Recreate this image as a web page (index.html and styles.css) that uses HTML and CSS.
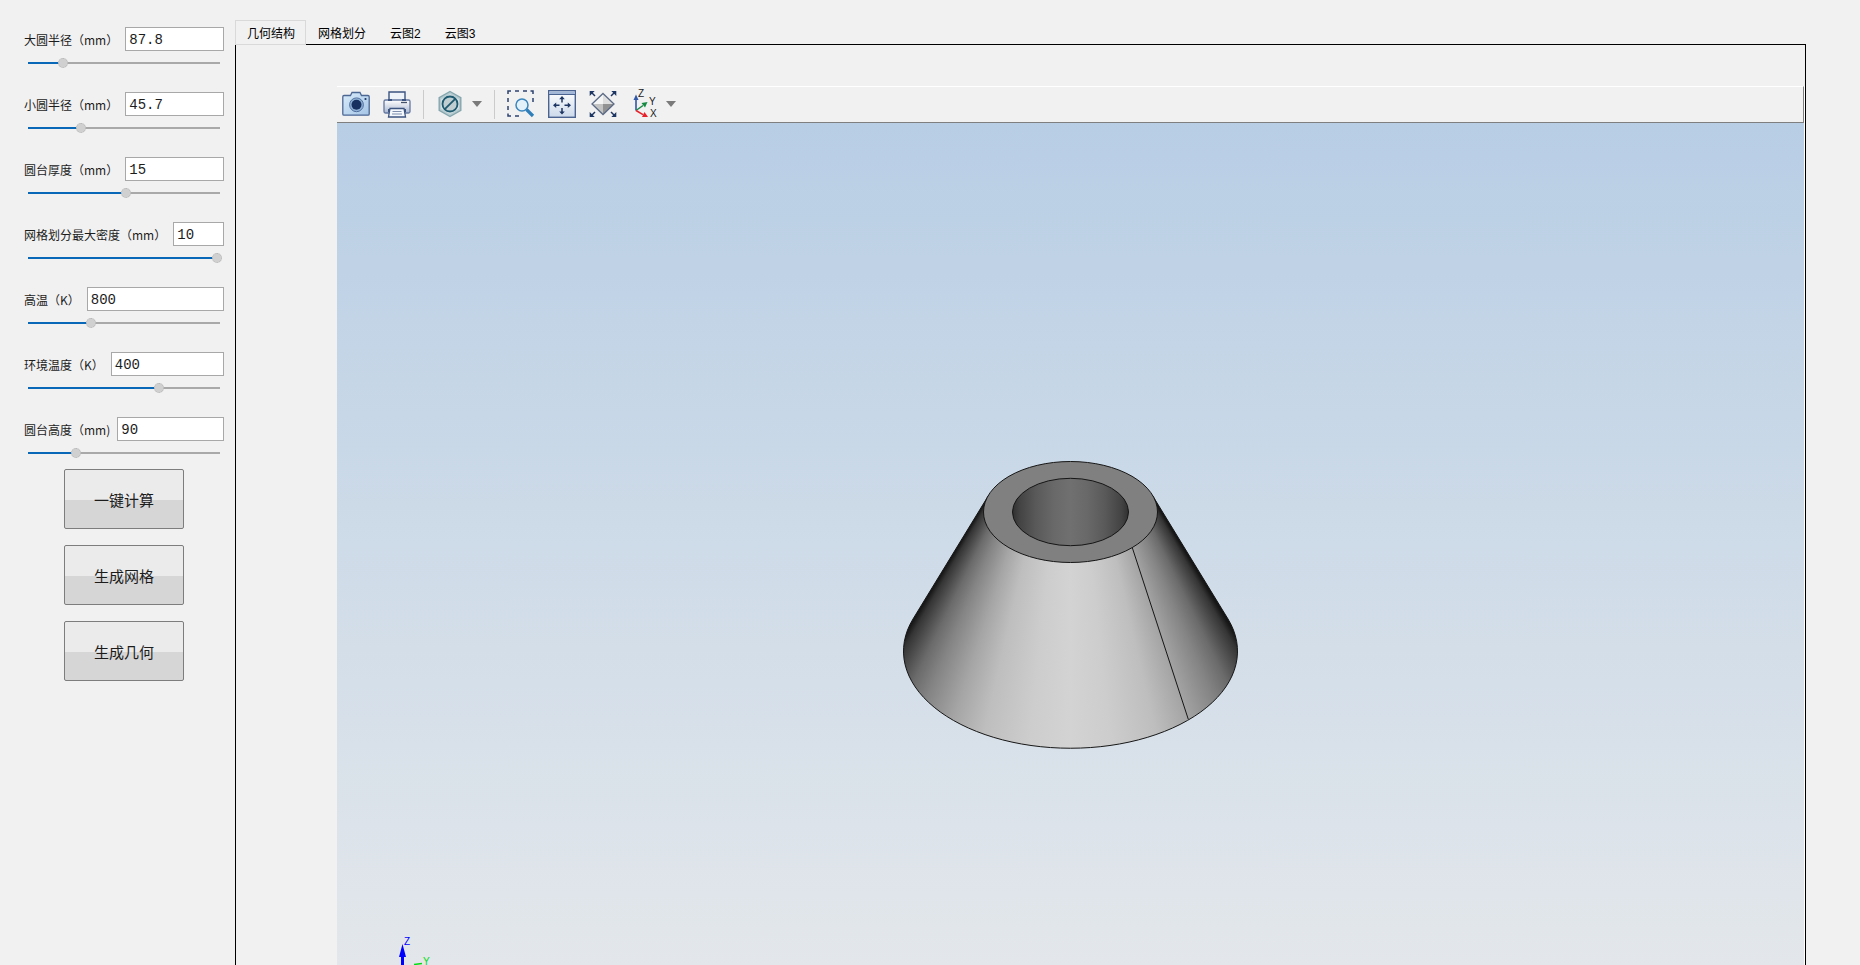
FILE: index.html
```html
<!DOCTYPE html>
<html lang="zh-CN">
<head>
<meta charset="utf-8">
<title>圆台</title>
<link rel="stylesheet" href="styles.css">
</head>
<body>
<div class="app">
  <form class="sidebar">
    <div class="param">
      <div class="param-row"><label for="p1">大圆半径（mm）</label><input class="field" id="p1" type="text" value="87.8"></div>
      <input class="slider" type="range" aria-label="大圆半径" value="17" style="--v:17">
    </div>
    <div class="param">
      <div class="param-row"><label for="p2">小圆半径（mm）</label><input class="field" id="p2" type="text" value="45.7"></div>
      <input class="slider" type="range" aria-label="小圆半径" value="27" style="--v:27">
    </div>
    <div class="param">
      <div class="param-row"><label for="p3">圆台厚度（mm）</label><input class="field" id="p3" type="text" value="15"></div>
      <input class="slider" type="range" aria-label="圆台厚度" value="51" style="--v:51">
    </div>
    <div class="param">
      <div class="param-row"><label for="p4">网格划分最大密度（mm）</label><input class="field" id="p4" type="text" value="10"></div>
      <input class="slider" type="range" aria-label="网格划分最大密度" value="100" style="--v:98">
    </div>
    <div class="param">
      <div class="param-row"><label for="p5">高温（K）</label><input class="field" id="p5" type="text" value="800"></div>
      <input class="slider" type="range" aria-label="高温" value="32" style="--v:32">
    </div>
    <div class="param">
      <div class="param-row"><label for="p6">环境温度（K）</label><input class="field" id="p6" type="text" value="400"></div>
      <input class="slider" type="range" aria-label="环境温度" value="69" style="--v:69">
    </div>
    <div class="param">
      <div class="param-row"><label for="p7">圆台高度（mm)</label><input class="field" id="p7" type="text" value="90"></div>
      <input class="slider" type="range" aria-label="圆台高度" value="24" style="--v:24">
    </div>
    <div class="actions">
      <button class="action" type="button">一键计算</button>
      <button class="action" type="button">生成网格</button>
      <button class="action" type="button">生成几何</button>
    </div>
  </form>

  <main class="main">
    <div class="tabs" role="tablist">
      <button class="tab active" type="button" role="tab" aria-selected="true">几何结构</button>
      <button class="tab" type="button" role="tab">网格划分</button>
      <button class="tab" type="button" role="tab">云图2</button>
      <button class="tab" type="button" role="tab">云图3</button>
    </div>
    <div class="panel">
      <div class="viewer">
        <div class="toolbar">
          <div class="group">
            <button class="tool" type="button" aria-label="截图">
              <svg viewBox="0 0 28 28">
                <defs><linearGradient id="cam" x1="0" y1="0" x2="1" y2="1"><stop offset="0" stop-color="#d9ecfa"/><stop offset="1" stop-color="#a4c4e6"/></linearGradient></defs>
                <path d="M2 5.500h6.500l1.500-3h8l1.500 3H26a1.200 1.200 0 0 1 1.200 1.200V24a1.200 1.200 0 0 1-1.200 1.200H2A1.200 1.200 0 0 1 .8 24V6.700A1.200 1.200 0 0 1 2 5.500z" fill="url(#cam)" stroke="#4c6794" stroke-width="1.300"/>
                <circle cx="14.500" cy="14.800" r="6.900" fill="#8fb0d4" stroke="#51709f"/>
                <circle cx="14.500" cy="14.800" r="5" fill="#17305f"/>
                <circle cx="23.500" cy="9" r="1.100" fill="#1d3768"/>
              </svg>
            </button>
            <button class="tool" type="button" aria-label="打印">
              <svg viewBox="0 0 28 28">
                <defs><linearGradient id="prn" x1="0" y1="0" x2="0" y2="1"><stop offset="0" stop-color="#fff"/><stop offset="1" stop-color="#a9b6d0"/></linearGradient></defs>
                <path d="M6 10V2h16v8" fill="#eef3fa" stroke="#3d5481" stroke-width="1.400"/>
                <rect x="1" y="10" width="26" height="13" rx="1.500" fill="url(#prn)" stroke="#6478a0" stroke-width="1.300"/>
                <path d="M5 9h4v2H5zM19 9h4v2h-4zM5 19h3v3H5zM20 19h3v3h-3z" fill="#3d5481"/>
                <path d="M18 12.500h6" stroke="#44516b" stroke-width="1.300"/>
                <path d="M7 18.500h14l1.500 8.500h-17z" fill="#f5f8fc" stroke="#3d5481" stroke-width="1.300"/>
                <path d="M9.500 21.500h9M9 24h10" stroke="#7d8eae" stroke-width="1.100"/>
              </svg>
            </button>
          </div>
          <span class="sep"></span>
          <div class="group menu-group">
            <button class="tool" type="button" aria-label="显示模式">
              <svg viewBox="0 0 28 28">
                <path d="M14 1.500l10.800 6.200v12.600L14 26.500 3.200 20.300V7.700z" fill="#b6cbd0" stroke="#86a6ae" stroke-width="1.400"/>
                <path d="M14 4l9 5.200v9.600L14 24l-9-5.200V9.200z" fill="#d3dfe2"/>
                <circle cx="14" cy="14" r="7.500" fill="#c0ced1" stroke="#1d5a70" stroke-width="1.800"/>
                <path d="M8.800 19.200L19.200 8.800" stroke="#1d5a70" stroke-width="1.800"/>
              </svg>
            </button>
            <button class="caret" type="button" aria-label="更多显示模式"></button>
          </div>
          <span class="sep"></span>
          <div class="group">
            <button class="tool" type="button" aria-label="框选缩放">
              <svg viewBox="0 0 28 28">
                <path d="M1 4V1h3M8 1h4M16 1h4M23.500 1H26v3M26 8v4M1 8v4M1 16v4M1 23.500V26h3M8 26h4" fill="none" stroke="#2b4270" stroke-width="1.500"/>
                <circle cx="15" cy="15" r="6" fill="#e3f1fb" stroke="#3b86bd" stroke-width="1.500"/>
                <path d="M19.500 19.500l6.500 6.500" stroke="#2f7fba" stroke-width="3.200"/>
              </svg>
            </button>
            <button class="tool" type="button" aria-label="适合窗口">
              <svg viewBox="0 0 28 28">
                <defs><linearGradient id="fit" x1="0" y1="0" x2="0" y2="1"><stop offset="0" stop-color="#fff"/><stop offset="1" stop-color="#ccd9ea"/></linearGradient></defs>
                <rect x=".7" y=".7" width="26.600" height="26.600" fill="url(#fit)" stroke="#4a6390" stroke-width="1.400"/>
                <path d="M1.400 1.400h25.200V4H1.400z" fill="#a3b8d8"/>
                <path d="M1 4.500h26" stroke="#4a6390"/>
                <path d="M14 8v4.500M14 18v4.500M7 15.300h4.500M16.500 15.300H21" stroke="#1d3563" stroke-width="1.500"/>
                <path d="M14 6l2.800 3.200h-5.600zM14 24.600l2.800-3.200h-5.600zM5 15.300l3.200-2.800v5.600zM23 15.300l-3.200-2.800v5.600z" fill="#1d3563"/>
              </svg>
            </button>
            <button class="tool" type="button" aria-label="旋转视图">
              <svg viewBox="0 0 28 28">
                <path d="M14 3.500L25 14H14z" fill="#dedede"/><path d="M14 3.500L3 14h11z" fill="#f5f5f5"/>
                <path d="M3 14h11v10.500z" fill="#c3c3c3"/><path d="M25 14H14v10.500z" fill="#929292"/>
                <path d="M14 3.500L25 14 14 24.500 3 14z" fill="none" stroke="#5c6b86" stroke-width="1.300"/>
                <path d="M2 2l4 4M26 2l-4 4M2 26l4-4M26 26l-4-4" stroke="#1d3563" stroke-width="1.500"/>
                <path d="M.7.900h5L.7 5.900zM27.300.900h-5l5 5zM.7 27.100h5l-5-5zM27.300 27.100h-5l5-5z" fill="#1d3563"/>
              </svg>
            </button>
            <div class="menu-group">
              <button class="tool" type="button" aria-label="坐标轴视图">
                <svg viewBox="0 0 28 28">
                  <path d="M6 20.500V8" stroke="#3157a8" stroke-width="1.600"/><path d="M6 4.500l2.500 5.500h-5z" fill="#3157a8"/>
                  <path d="M6 20.500l7-5" stroke="#158a40" stroke-width="1.500"/><path d="M17.500 12l-2.500 5.500-3.500-4.500z" fill="#158a40"/>
                  <path d="M6 20.500l7 4.200" stroke="#e8202a" stroke-width="1.500"/><path d="M18 27h-6l2.500-5z" fill="#e8202a"/>
                  <text class="axis-label" x="8" y="7">Z</text><text class="axis-label" x="19" y="15">Y</text><text class="axis-label" x="20" y="27">X</text>
                </svg>
              </button>
              <button class="caret" type="button" aria-label="更多视图"></button>
            </div>
          </div>
        </div>
        <div class="canvas">
          <div class="model">
            <div class="cone"></div>
            <svg class="edges" viewBox="0 0 337 290">
              <defs>
                <linearGradient id="bore"><stop offset="0" stop-color="#303030"/><stop offset=".06" stop-color="#434343"/><stop offset=".2" stop-color="#595959"/><stop offset=".36" stop-color="#696969"/><stop offset=".5" stop-color="#707070"/><stop offset=".64" stop-color="#696969"/><stop offset=".8" stop-color="#595959"/><stop offset=".94" stop-color="#434343"/><stop offset="1" stop-color="#303030"/></linearGradient>
              </defs>
              <g stroke="#161616" fill="none">
                <path d="M86.500 35.500L11 159A167 97 0 1 0 326 159L250.500 35.500"/>
                <ellipse cx="168.500" cy="52" rx="87" ry="50.500" fill="#808080"/>
                <ellipse cx="168.500" cy="52" rx="58" ry="33.700" fill="url(#bore)"/>
                <path d="M230.300 87.700L286.300 259.300"/>
              </g>
            </svg>
          </div>
          <svg class="triad" viewBox="0 0 50 32">
            <path d="M11 22h3v10h-3zM12.500 11l3.500 13H9z" fill="#00f"/>
            <path d="M24 31.500l8-1" stroke="#0d1" stroke-width="1.500"/>
            <text class="triad-label" x="14" y="12" fill="#00f">Z</text>
            <text class="triad-label" x="33" y="32" fill="#0d1">Y</text>
          </svg>
        </div>
      </div>
    </div>
  </main>
</div>
</body>
</html>
```
FILE: styles.css
```css
* {
  box-sizing: border-box;
}

body {
  margin: 0;
  background: #f1f1f1;
  color: #1c1c1c;
  font-family: "Noto Sans", "Noto Sans CJK SC", sans-serif;
  font-size: 12px;
  overflow: hidden;
}

button {
  font-family: inherit;
  padding: 0;
  border: 0;
  background: none;
  color: inherit;
}

.app {
  display: flex;
  height: 100vh;
}

/* Parameter column */
.sidebar {
  flex: none;
  width: 235px;
  padding: 27px 11px 0 24px;
}

.param {
  display: flex;
  flex-direction: column;
  gap: 6px;
  height: 65px;
}

.param-row {
  display: flex;
  align-items: center;
  gap: 7px;
  height: 24px;
}

.param-row label {
  white-space: nowrap;
  font-family: "Noto Sans CJK SC", sans-serif;
}

.field {
  flex: 1;
  min-width: 0;
  width: 0;
  height: 24px;
  padding: 2px 3px 0;
  border: 1px solid #a8a8a8;
  background: #fff;
  color: #1c1c1c;
  font-family: "Liberation Mono", monospace;
  font-size: 14px;
}

.slider {
  appearance: none;
  width: 196px;
  height: 12px;
  margin: 0 2px;
  background:
    linear-gradient(#0a68b8, #0a68b8) 2px 5px / calc(var(--v) * 1%) 2px no-repeat,
    linear-gradient(#a9a9a9, #a9a9a9) 2px 5px / calc(100% - 4px) 2px no-repeat;
}

.slider::-webkit-slider-thumb {
  appearance: none;
  width: 10px;
  height: 10px;
  border: 1px dotted #b4b4b4;
  border-radius: 50%;
  background: #d0d0d0;
}

.actions {
  display: flex;
  flex-direction: column;
  gap: 16px;
  width: 120px;
  margin: -13px auto 0 40px;
}

.action {
  height: 60px;
  border: 1px solid #7d7d7d;
  border-radius: 2px;
  background: linear-gradient(#ebebeb 52%, #d6d6d6 52%);
  font-family: "Noto Sans CJK SC", sans-serif;
  font-size: 15px;
}

/* Tabbed area */
.main {
  flex: 1;
  min-width: 0;
  display: flex;
  flex-direction: column;
  padding: 20px 54px 0 0;
}

.tabs {
  display: flex;
  height: 25px;
}

.tab {
  padding: 0 12px;
  border-bottom: 1px solid #000;
  color: #000;
  font-family: "Liberation Sans", "Noto Sans CJK SC", sans-serif;
  font-size: 12px;
}

.tab.active {
  padding: 0 10px 0 11px;
  border: 1px solid #d9d9d9;
}

.tabs::after {
  content: "";
  flex: 1;
  border-bottom: 1px solid #000;
}

.panel {
  flex: 1;
  min-height: 0;
  display: flex;
  padding: 41px 0 0 101px;
  border: solid #000;
  border-width: 0 1px;
}

.viewer {
  flex: 1;
  min-width: 0;
  display: flex;
  flex-direction: column;
  border-right: 1px solid #fff;
}

.toolbar {
  display: flex;
  align-items: center;
  gap: 12px;
  height: 37px;
  padding: 0 5px 1px;
  border: solid #7f7f7f;
  border-width: 1px 1px 1px 0;
  border-top-color: #fff;
}

.group {
  display: flex;
  gap: 13px;
}

.menu-group {
  display: flex;
  align-items: center;
  gap: 8px;
}

.tool {
  width: 28px;
  height: 28px;
}

.tool svg {
  display: block;
  width: 28px;
  height: 28px;
  overflow: visible;
}

.axis-label {
  font: 10px "Liberation Sans", sans-serif;
  fill: #222;
}

.caret {
  border: solid transparent;
  border-width: 6px 5px 0;
  border-top-color: #7a7a7a;
}

.sep {
  width: 1px;
  height: 29px;
  background: #cbcbcb;
}

.canvas {
  position: relative;
  flex: 1;
  min-height: 0;
  display: flex;
  justify-content: center;
  align-items: flex-start;
  padding-top: 337px;
  background: linear-gradient(#b8cee5, #cedbe8 50%, #e3e7eb);
}

.model {
  position: relative;
  width: 337px;
  height: 290px;
}

/* Shading follows the generators, which meet at the apex above the frustum */
.cone {
  height: 290px;
  clip-path: path("M86.500 35.500 L11 159 A167 97 0 1 0 326 159 L250.500 35.500 Z");
  background: conic-gradient(from 148deg at 168px -99px,
    #0a0a0a 0, #191919 1deg, #353535 2deg, #505050 4deg, #6b6b6b 6deg, #848484 9deg,
    #a5a5a5 14deg, #bebebe 19deg, #cdcdcd 26deg, #d3d3d3 32deg, #cdcdcd 38deg,
    #bebebe 45deg, #a5a5a5 50deg, #848484 55deg, #6b6b6b 58deg, #505050 60deg,
    #353535 62deg, #191919 63deg, #0a0a0a 64deg);
}

.edges {
  position: absolute;
  inset: 0;
}

.triad {
  position: absolute;
  left: 53px;
  bottom: 0;
  width: 50px;
  height: 32px;
}

.triad-label {
  font: 10px "Liberation Sans", sans-serif;
}
```
